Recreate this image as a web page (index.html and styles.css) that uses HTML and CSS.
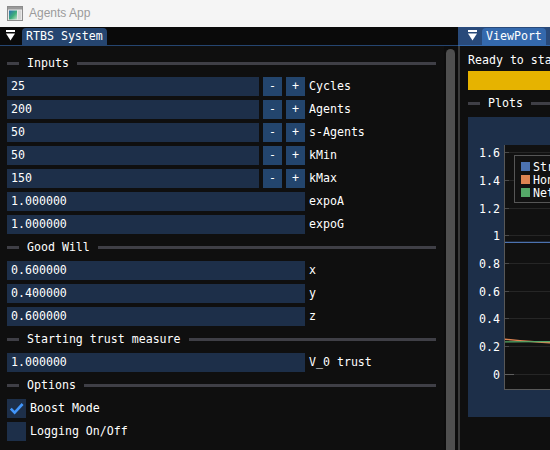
FILE: index.html
```html
<!DOCTYPE html>
<html>
<head>
<meta charset="utf-8">
<title>Agents App</title>
<link rel="stylesheet" href="styles.css">
</head>
<body>
<header class="titlebar">
  <svg class="appicon" width="16" height="15" viewBox="0 0 16 15">
    <defs>
      <linearGradient id="ig" x1="0" y1="0" x2="1" y2="1">
        <stop offset="0" stop-color="#2d6fb5"/>
        <stop offset="0.55" stop-color="#3fae7a"/>
        <stop offset="1" stop-color="#bfe0c8"/>
      </linearGradient>
    </defs>
    <rect x="0.5" y="0.5" width="15" height="14" fill="#e8e8e8" stroke="#8c8c8c"/>
    <rect x="1" y="1" width="14" height="2.5" fill="#9a9a9a"/>
    <rect x="2" y="4.5" width="8" height="9" fill="url(#ig)"/>
    <rect x="11" y="4.5" width="3" height="9" fill="#d4d4d4"/>
  </svg>
  <span class="apptitle">Agents App</span>
</header>

<main class="dock">
  <section class="win win-left">
    <div class="tabbar tabbar-left">
      <span class="menubtn menubtn-left">
        <svg width="9" height="11" viewBox="0 0 9 11"><rect x="0" y="0" width="9" height="2" fill="#fff"/><polygon points="0,3.5 9,3.5 4.5,10.5" fill="#fff"/></svg>
      </span>
      <span class="tab tab-left">RTBS System</span>
    </div>
    <div class="winbody">
      <div class="content">
        <div class="sep"><span class="sep-dash"></span><span class="sep-text">Inputs</span><span class="sep-line"></span></div>
        <div class="row"><div class="frame frame-int">25</div><span class="btn">-</span><span class="btn">+</span><span class="label">Cycles</span></div>
        <div class="row"><div class="frame frame-int">200</div><span class="btn">-</span><span class="btn">+</span><span class="label">Agents</span></div>
        <div class="row"><div class="frame frame-int">50</div><span class="btn">-</span><span class="btn">+</span><span class="label">s-Agents</span></div>
        <div class="row"><div class="frame frame-int">50</div><span class="btn">-</span><span class="btn">+</span><span class="label">kMin</span></div>
        <div class="row"><div class="frame frame-int">150</div><span class="btn">-</span><span class="btn">+</span><span class="label">kMax</span></div>
        <div class="row"><div class="frame frame-float">1.000000</div><span class="label">expoA</span></div>
        <div class="row"><div class="frame frame-float">1.000000</div><span class="label">expoG</span></div>

        <div class="sep"><span class="sep-dash"></span><span class="sep-text">Good Will</span><span class="sep-line"></span></div>
        <div class="row"><div class="frame frame-float">0.600000</div><span class="label">x</span></div>
        <div class="row"><div class="frame frame-float">0.400000</div><span class="label">y</span></div>
        <div class="row"><div class="frame frame-float">0.600000</div><span class="label">z</span></div>

        <div class="sep"><span class="sep-dash"></span><span class="sep-text">Starting trust measure</span><span class="sep-line"></span></div>
        <div class="row"><div class="frame frame-float">1.000000</div><span class="label">V_0 trust</span></div>

        <div class="sep"><span class="sep-dash"></span><span class="sep-text">Options</span><span class="sep-line"></span></div>
        <div class="row">
          <span class="checkbox">
            <svg width="19" height="19" viewBox="0 0 19 19"><polyline points="3.8,9.6 7.6,13.6 15.6,5" fill="none" stroke="#4296fa" stroke-width="2.6" stroke-linejoin="miter"/></svg>
          </span>
          <span class="label">Boost Mode</span>
        </div>
        <div class="row"><span class="checkbox"></span><span class="label">Logging On/Off</span></div>
      </div>
      <div class="scrollbar"><div class="thumb"></div></div>
    </div>
  </section>

  <section class="win win-right">
    <div class="tabbar tabbar-right">
      <span class="menubtn menubtn-right">
        <svg width="9" height="11" viewBox="0 0 9 11"><rect x="0" y="0" width="9" height="2" fill="#fff"/><polygon points="0,3.5 9,3.5 4.5,10.5" fill="#fff"/></svg>
      </span>
      <span class="tab tab-right">ViewPort</span>
    </div>
    <div class="winbody winbody-right">
      <div class="content content-right">
        <div class="textline">Ready to start simulation</div>
        <div class="progress"><div class="progress-fill"></div></div>
        <div class="sep"><span class="sep-dash"></span><span class="sep-text">Plots</span><span class="sep-line"></span></div>
        <div class="plot">
          <svg width="400" height="300" viewBox="0 0 400 300" class="plot-svg">
            <rect x="36" y="28" width="364" height="244" fill="#111111"/>
            <g stroke="#262626" stroke-width="1">
              <line x1="37" y1="35.5" x2="400" y2="35.5"/>
              <line x1="37" y1="63.5" x2="400" y2="63.5"/>
              <line x1="37" y1="91.5" x2="400" y2="91.5"/>
              <line x1="37" y1="118.5" x2="400" y2="118.5"/>
              <line x1="37" y1="146.5" x2="400" y2="146.5"/>
              <line x1="37" y1="174.5" x2="400" y2="174.5"/>
              <line x1="37" y1="201.5" x2="400" y2="201.5"/>
              <line x1="37" y1="229.5" x2="400" y2="229.5"/>
              <line x1="37" y1="257.5" x2="400" y2="257.5"/>
            </g>
            <g stroke="#4a4a4a" stroke-width="1">
              <line x1="36" y1="35.5" x2="41" y2="35.5"/>
              <line x1="36" y1="63.5" x2="41" y2="63.5"/>
              <line x1="36" y1="91.5" x2="41" y2="91.5"/>
              <line x1="36" y1="118.5" x2="41" y2="118.5"/>
              <line x1="36" y1="146.5" x2="41" y2="146.5"/>
              <line x1="36" y1="174.5" x2="41" y2="174.5"/>
              <line x1="36" y1="201.5" x2="41" y2="201.5"/>
              <line x1="36" y1="229.5" x2="41" y2="229.5"/>
            </g>
            <line x1="36" y1="257.5" x2="46" y2="257.5" stroke="#5e5e5e" stroke-width="1"/>
            <g class="axis-label" text-anchor="end">
              <text x="32" y="39.5">1.6</text>
              <text x="32" y="67.5">1.4</text>
              <text x="32" y="95.5">1.2</text>
              <text x="32" y="122.5">1</text>
              <text x="32" y="150.5">0.8</text>
              <text x="32" y="178.5">0.6</text>
              <text x="32" y="205.5">0.4</text>
              <text x="32" y="233.5">0.2</text>
              <text x="32" y="261.5">0</text>
            </g>
            <polyline points="37,125.4 400,125.4" fill="none" stroke="#4c72b0" stroke-width="1.3"/>
            <polyline points="37,222.2 52,223.6 70,225 90,226.3 130,227" fill="none" stroke="#dd8452" stroke-width="1.4"/>
            <polyline points="37,224.8 70,224.7 130,224.5" fill="none" stroke="#55a868" stroke-width="1.3"/>
            <line x1="36.5" y1="28" x2="36.5" y2="272.5" stroke="#585858"/>
            <line x1="36" y1="272.5" x2="400" y2="272.5" stroke="#585858"/>
            <rect x="46.5" y="38.5" width="200" height="47" fill="#121212" stroke="#565656"/>
            <rect x="53" y="45" width="9" height="9" fill="#4c72b0"/>
            <rect x="53" y="58" width="9" height="9" fill="#dd8452"/>
            <rect x="53" y="71" width="9" height="9" fill="#55a868"/>
            <g class="legend-label">
              <text x="65" y="53.5">Strategic Agents</text>
              <text x="65" y="66.5">Honest Agents</text>
              <text x="65" y="79.5">Network Trust</text>
            </g>
          </svg>
        </div>
      </div>
    </div>
  </section>
</main>
</body>
</html>
```

FILE: styles.css
```css
html, body {
  margin: 0;
  padding: 0;
}

body {
  width: 550px;
  height: 450px;
  overflow: hidden;
  background: #0f0f0f;
  color: #ffffff;
  font-family: "DejaVu Sans Mono", "Liberation Mono", monospace;
  font-size: 11.6px;
  line-height: 13px;
}

/* Windows title bar */
.titlebar {
  height: 27px;
  background: #f5f5f5;
  display: flex;
  align-items: center;
  gap: 6px;
  padding-left: 7px;
  box-sizing: border-box;
  font-family: "Liberation Sans", Arial, sans-serif;
  font-size: 12px;
  color: #9b9b9b;
}

.appicon {
  display: block;
  margin-top: -1px;
}

/* Dock area */
.dock {
  display: flex;
  height: 423px;
}

.win {
  display: flex;
  flex-direction: column;
  min-width: 0;
}

.win-left {
  width: 458px;
  flex: none;
}

.win-right {
  flex: 1;
  overflow: hidden;
}

.tabbar {
  height: 18px;
  display: flex;
  align-items: flex-end;
  flex: none;
}

.tabbar-left {
  background: #0a0a0a;
  border-bottom: 1px solid #254570;
}

.tabbar-right {
  background: #294a7a;
  border-bottom: 1px solid #3469ad;
}

.menubtn {
  align-self: flex-start;
  display: flex;
  padding-top: 3px;
}

.menubtn svg {
  display: block;
}

.menubtn-left {
  margin-left: 6px;
  margin-right: 7px;
}

.menubtn-right {
  margin-left: 10px;
  margin-right: 5px;
}

.tab {
  height: 17px;
  line-height: 17px;
  padding: 0 4px;
  border-radius: 4px 4px 0 0;
  white-space: nowrap;
}

.tab-left {
  background: #254570;
}

.tab-right {
  background: #3469ad;
}

.winbody {
  flex: 1;
  display: flex;
  min-height: 0;
  overflow: hidden;
}

.winbody-right {
  border-left: 2px solid #3a3a3a;
}

.content {
  flex: 1;
  display: flex;
  flex-direction: column;
  gap: 4px;
  padding: 8px 8px 0 7px;
  min-width: 0;
}

.content-right {
  flex: none;
  width: 400px;
  padding: 8px 0 0 8px;
}

/* Separator with text */
.sep {
  height: 19px;
  display: flex;
  align-items: center;
  flex: none;
}

.sep-dash {
  width: 12px;
  height: 3px;
  background: #3f3f46;
  flex: none;
}

.sep-text {
  margin: 0 8px;
  white-space: nowrap;
}

.sep-line {
  flex: 1;
  height: 3px;
  background: #3f3f46;
}

/* Input rows */
.row {
  height: 19px;
  display: flex;
  align-items: center;
  gap: 4px;
  flex: none;
}

.frame {
  height: 19px;
  line-height: 19px;
  background: #1d2f49;
  padding-left: 4px;
  box-sizing: border-box;
  white-space: nowrap;
}

.frame-int {
  width: 252px;
}

.frame-float {
  width: 298px;
}

.btn {
  width: 19px;
  height: 19px;
  line-height: 19px;
  background: #23456d;
  text-align: center;
}

.label {
  white-space: nowrap;
  line-height: 19px;
}

.checkbox {
  width: 19px;
  height: 19px;
  background: #1d2f49;
  display: block;
}

.checkbox svg {
  display: block;
}

/* Scrollbar */
.scrollbar {
  width: 14px;
  flex: none;
  background: #0c0c0c;
  padding: 3px 3px 0 2px;
  box-sizing: border-box;
}

.thumb {
  height: 420px;
  background: #4f4f4f;
  border-radius: 5px 5px 0 0;
}

/* Right window */
.textline {
  height: 13px;
  white-space: nowrap;
}

.progress {
  height: 19px;
  background: #1d2f49;
  flex: none;
}

.progress-fill {
  height: 100%;
  width: 100%;
  background: #e6b300;
}

.plot {
  width: 400px;
  height: 300px;
  background: #1d2f49;
  flex: none;
}

.plot-svg {
  display: block;
  font-family: "DejaVu Sans Mono", "Liberation Mono", monospace;
  font-size: 11.6px;
}

.axis-label text,
.legend-label text {
  fill: #ffffff;
}
```
